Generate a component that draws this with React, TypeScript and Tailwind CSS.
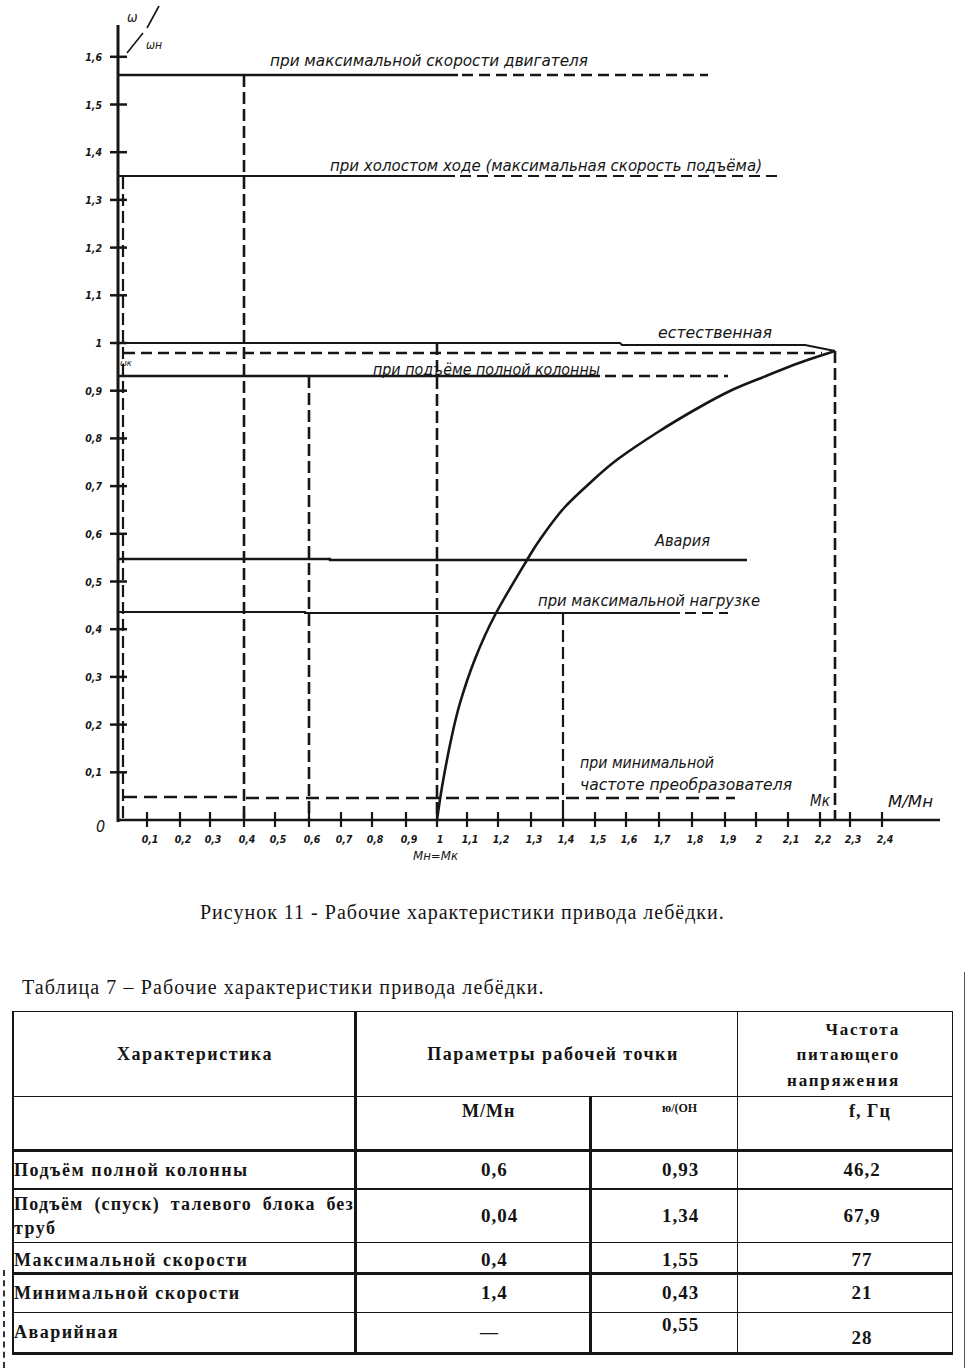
import React from "react";

const ink = "#161616";

type Pt = [number, number];

// natural characteristic, measured off the scan
const curve: Pt[] = [
  [437, 820],
  [442, 787],
  [451, 740],
  [460, 703],
  [475, 659],
  [495, 615],
  [527, 560],
  [541, 538],
  [564, 508],
  [591, 482],
  [618, 459],
  [658, 432],
  [698, 408],
  [732, 390],
  [766, 376],
  [799, 363],
  [835, 351],
];

function smoothPath(pts: Pt[]) {
  let d = `M${pts[0][0]},${pts[0][1]}`;
  for (let i = 0; i < pts.length - 1; i++) {
    const p0 = pts[i - 1] || pts[i];
    const p1 = pts[i];
    const p2 = pts[i + 1];
    const p3 = pts[i + 2] || p2;
    const c1x = p1[0] + (p2[0] - p0[0]) / 6;
    const c1y = p1[1] + (p2[1] - p0[1]) / 6;
    const c2x = p2[0] - (p3[0] - p1[0]) / 6;
    const c2y = p2[1] - (p3[1] - p1[1]) / 6;
    d += ` C${c1x.toFixed(1)},${c1y.toFixed(1)} ${c2x.toFixed(1)},${c2y.toFixed(1)} ${p2[0]},${p2[1]}`;
  }
  return d;
}

const yTicks = [
  "0,1", "0,2", "0,3", "0,4", "0,5", "0,6", "0,7", "0,8",
  "0,9", "1", "1,1", "1,2", "1,3", "1,4", "1,5", "1,6",
].map((label, i) => ({ label, y: 820 - (i + 1) * 47.7 }));

const xTickPos = [
  147, 180, 210, 244, 275, 309, 341, 372, 406, 437, 467, 498,
  531, 563, 595, 626, 659, 692, 725, 756, 788, 820, 850, 882,
];
const xTickLabels = [
  "0,1", "0,2", "0,3", "0,4", "0,5", "0,6", "0,7", "0,8", "0,9", "1",
  "1,1", "1,2", "1,3", "1,4", "1,5", "1,6", "1,7", "1,8", "1,9", "2",
  "2,1", "2,2", "2,3", "2,4",
];

const labels = [
  { t: "при максимальной скорости двигателя", x: 270, y: 66, w: 318 },
  { t: "при холостом ходе (максимальная скорость подъёма)", x: 330, y: 171, w: 432 },
  { t: "естественная", x: 658, y: 338, w: 114 },
  { t: "при подъёме полной колонны", x: 373, y: 375, w: 227 },
  { t: "Авария", x: 655, y: 546, w: 55 },
  { t: "при максимальной нагрузке", x: 538, y: 606, w: 222 },
  { t: "при минимальной", x: 580, y: 768, w: 134 },
  { t: "частоте преобразователя", x: 580, y: 790, w: 212 },
];

const chartFont = "'DejaVu Sans Condensed', 'DejaVu Sans', sans-serif";

function Chart() {
  const dash = "11 6";
  return (
    <svg width={968} height={880} viewBox="0 0 968 880" className="block">
      <g stroke={ink} fill="none" strokeLinecap="butt">
        {/* axes */}
        <line x1={118} y1={25} x2={118} y2={822} strokeWidth={3} />
        <line x1={117} y1={820} x2={940} y2={820} strokeWidth={2.5} />
        {yTicks.map((t) => (
          <line key={t.label} x1={110} y1={t.y} x2={127} y2={t.y} strokeWidth={2.5} />
        ))}
        {xTickPos.map((x) => (
          <line key={x} x1={x} y1={812} x2={x} y2={827} strokeWidth={2.2} />
        ))}

        {/* ω/ωн slashes */}
        <line x1={159} y1={6} x2={147} y2={28} strokeWidth={1.6} />
        <line x1={143} y1={33} x2={127} y2={53} strokeWidth={1.6} />

        {/* 1,55 — max motor speed */}
        <line x1={118} y1={75} x2={458} y2={75} strokeWidth={2.6} />
        <line x1={462} y1={75} x2={708} y2={75} strokeWidth={2.6} strokeDasharray={dash} />

        {/* 1,34 — idle run */}
        <line x1={118} y1={176} x2={455} y2={176} strokeWidth={2.2} />
        <line x1={460} y1={176} x2={780} y2={176} strokeWidth={2.2} strokeDasharray={dash} />

        {/* natural characteristic */}
        <polyline points="118,343 620,343 622,345 805,345 835,351" strokeWidth={2} />
        <line x1={124} y1={353} x2={822} y2={353} strokeWidth={2.4} strokeDasharray={dash} />
        <path d={smoothPath(curve)} strokeWidth={2.6} />

        {/* 0,93 — full column */}
        <line x1={118} y1={376} x2={600} y2={376} strokeWidth={2.6} />
        <line x1={605} y1={376} x2={728} y2={376} strokeWidth={2.4} strokeDasharray={dash} />

        {/* 0,55 — emergency */}
        <polyline points="118,559 330,559 330,560 747,560" strokeWidth={2.3} />

        {/* 0,43 — max load */}
        <polyline points="118,612 305,612 305,613 680,613" strokeWidth={2} />
        <line x1={685} y1={613} x2={728} y2={613} strokeWidth={2} strokeDasharray={dash} />

        {/* 0,05 — min converter frequency */}
        <line x1={124} y1={797} x2={244} y2={797} strokeWidth={2.6} strokeDasharray="13 7" />
        <line x1={246} y1={798} x2={735} y2={798} strokeWidth={2.6} strokeDasharray="13 7" />

        {/* verticals */}
        <line x1={123} y1={177} x2={123} y2={820} strokeWidth={2.2} strokeDasharray="12 5" />
        <line x1={244} y1={75} x2={244} y2={820} strokeWidth={2.6} strokeDasharray="12 5" />
        <line x1={309} y1={376} x2={309} y2={820} strokeWidth={2.6} strokeDasharray="12 5" />
        <line x1={437} y1={343} x2={437} y2={820} strokeWidth={2.6} strokeDasharray="12 5" />
        <line x1={563} y1={613} x2={563} y2={820} strokeWidth={2.2} strokeDasharray="12 5" />
        <line x1={835} y1={351} x2={835} y2={820} strokeWidth={2.6} strokeDasharray="12 5" />
      </g>

      <g fill={ink} fontFamily={chartFont} fontStyle="italic">
        {yTicks.map((t) => (
          <text key={t.label} x={102} y={t.y + 4} fontSize={10.5} fontWeight={600} textAnchor="end">
            {t.label}
          </text>
        ))}
        {xTickPos.map((x, i) => (
          <text key={x} x={x + 3} y={843} fontSize={10.5} fontWeight={600} textAnchor="middle">
            {xTickLabels[i]}
          </text>
        ))}
        <text x={96} y={832} fontSize={16}>
          0
        </text>
        <text x={127} y={22} fontSize={14}>
          ω
        </text>
        <text x={146} y={49} fontSize={12}>
          ωн
        </text>
        <text x={120} y={366} fontSize={9}>
          ωк
        </text>
        {labels.map((l) => (
          <text
            key={l.t}
            x={l.x}
            y={l.y}
            fontSize={15}
            textLength={l.w}
            lengthAdjust="spacingAndGlyphs"
          >
            {l.t}
          </text>
        ))}
        <text x={810} y={806} fontSize={15}>
          Мк
        </text>
        <text x={888} y={807} fontSize={15} textLength={45} lengthAdjust="spacingAndGlyphs">
          М/Мн
        </text>
        <text x={413} y={860} fontSize={12} textLength={45} lengthAdjust="spacingAndGlyphs">
          Мн=Мк
        </text>
      </g>
    </svg>
  );
}

export default function App() {
  return (
    <div className="w-[968px] h-[1368px] bg-white text-[#141414] overflow-hidden">
      <Chart />

      <div className="h-[92px] pt-[20px] pl-[200px] font-['Liberation_Serif',serif] text-[20px] leading-[24px] tracking-[1px]">
        Рисунок 11 - Рабочие характеристики привода лебёдки.
      </div>

      <div className="flex h-[396px]">
        <div className="w-[12px] shrink-0">
          <div className="mt-[298px] ml-[3px] h-[98px] border-l-2 border-dashed border-[#333]" />
        </div>

        <div className="w-[941px] shrink-0 font-['Liberation_Serif',serif]">
          <div className="h-[39px] pt-[3px] pl-[10px] text-[20px] leading-[24px] tracking-[1.1px]">
            Таблица 7 – Рабочие характеристики привода лебёдки.
          </div>

          <div className="border-t border-l-2 border-r border-[#161616] font-bold text-[18px] tracking-[1.5px]">
            {/* header row 1 */}
            <div className="flex h-[85px] border-b border-[#161616]">
              <div className="w-[343px] border-r-[3px] border-[#161616] flex items-center justify-center pl-[22px]">
                Характеристика
              </div>
              <div className="w-[381px] border-r border-[#161616] flex items-center justify-center pl-[12px]">
                Параметры рабочей точки
              </div>
              <div className="w-[214px] flex flex-col justify-center items-end pr-[52px] text-[17px] leading-[25.5px] tracking-[1.8px] pt-[2px]">
                <span>Частота</span>
                <span>питающего</span>
                <span>напряжения</span>
              </div>
            </div>

            {/* header row 2 */}
            <div className="flex h-[55px] border-b-[3px] border-[#161616]">
              <div className="w-[343px] border-r-[3px] border-[#161616]" />
              <div className="w-[235px] border-r-[3px] border-[#161616] pl-[105px] pt-[3px] leading-[22px] tracking-[1px]">
                М/Мн
              </div>
              <div className="w-[146px] border-r border-[#161616] pl-[70px] pt-[2px] text-[12px] leading-[18px] tracking-[0px]">
                ю/(ОН
              </div>
              <div className="w-[214px] pl-[111px] pt-[3px] leading-[22px] tracking-[1px]">
                f, Гц
              </div>
            </div>

            {/* Подъём полной колонны */}
            <div className="flex h-[38px] border-b-2 border-[#161616]">
              <div className="w-[343px] border-r-[3px] border-[#161616] flex items-center">
                Подъём полной колонны
              </div>
              <div className="w-[235px] border-r-[3px] border-[#161616] flex items-center pl-[124px] text-[19px] tracking-[1px]">
                0,6
              </div>
              <div className="w-[146px] border-r border-[#161616] flex items-center pl-[70px] text-[19px] tracking-[1px]">
                0,93
              </div>
              <div className="w-[214px] flex items-center justify-center pl-[34px] text-[19px] tracking-[1px]">
                46,2
              </div>
            </div>

            {/* Подъём (спуск) талевого блока без труб */}
            <div className="flex h-[53px] border-b border-[#161616]">
              <div className="w-[343px] border-r-[3px] border-[#161616] flex flex-col justify-center leading-[24px]">
                <div className="flex justify-between tracking-[1.2px]">
                  <span>Подъём</span>
                  <span>(спуск)</span>
                  <span>талевого</span>
                  <span>блока</span>
                  <span>без</span>
                </div>
                <div>труб</div>
              </div>
              <div className="w-[235px] border-r-[3px] border-[#161616] flex items-center pl-[124px] text-[19px] tracking-[1px]">
                0,04
              </div>
              <div className="w-[146px] border-r border-[#161616] flex items-center pl-[70px] text-[19px] tracking-[1px]">
                1,34
              </div>
              <div className="w-[214px] flex items-center justify-center pl-[34px] text-[19px] tracking-[1px]">
                67,9
              </div>
            </div>

            {/* Максимальной скорости */}
            <div className="flex h-[32px] border-b-[3px] border-[#161616]">
              <div className="w-[343px] border-r-[3px] border-[#161616] flex items-center pt-[6px]">
                Максимальной скорости
              </div>
              <div className="w-[235px] border-r-[3px] border-[#161616] flex items-center pt-[6px] pl-[124px] text-[19px] tracking-[1px]">
                0,4
              </div>
              <div className="w-[146px] border-r border-[#161616] flex items-center pt-[6px] pl-[70px] text-[19px] tracking-[1px]">
                1,55
              </div>
              <div className="w-[214px] flex items-center justify-center pt-[6px] pl-[34px] text-[19px] tracking-[1px]">
                77
              </div>
            </div>

            {/* Минимальной скорости */}
            <div className="flex h-[38px] border-b border-[#161616]">
              <div className="w-[343px] border-r-[3px] border-[#161616] flex items-center">
                Минимальной скорости
              </div>
              <div className="w-[235px] border-r-[3px] border-[#161616] flex items-center pl-[124px] text-[19px] tracking-[1px]">
                1,4
              </div>
              <div className="w-[146px] border-r border-[#161616] flex items-center pl-[70px] text-[19px] tracking-[1px]">
                0,43
              </div>
              <div className="w-[214px] flex items-center justify-center pl-[34px] text-[19px] tracking-[1px]">
                21
              </div>
            </div>

            {/* Аварийная */}
            <div className="flex h-[42px] border-b-[3px] border-[#161616]">
              <div className="w-[343px] border-r-[3px] border-[#161616] flex items-center">
                Аварийная
              </div>
              <div className="w-[235px] border-r-[3px] border-[#161616] flex items-center pl-[123px] text-[18px] tracking-[0px]">
                —
              </div>
              <div className="w-[146px] border-r border-[#161616] pl-[70px] pt-[1px] leading-[22px] text-[19px] tracking-[1px]">
                0,55
              </div>
              <div className="w-[214px] flex items-end justify-center pb-[3px] pl-[34px] leading-[22px] text-[19px] tracking-[1px]">
                28
              </div>
            </div>
          </div>
        </div>

        <div className="w-[11px] shrink-0" />
        <div className="w-px shrink-0 bg-[#555]" />
      </div>
    </div>
  );
}
